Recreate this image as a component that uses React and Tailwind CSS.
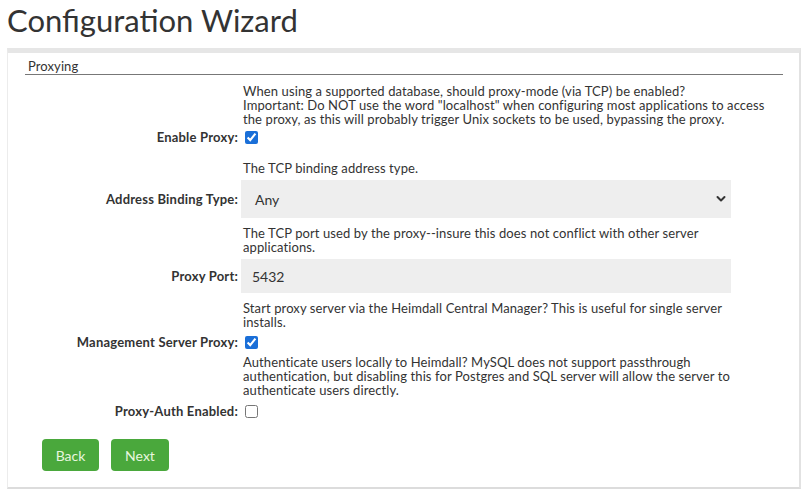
import React from "react";

const font = { fontFamily: "Lato, 'Noto Sans', sans-serif" };

function Desc({ children, mb = "mb-[5px]" }) {
  return (
    <div className={`flex ${mb}`}>
      <div className="w-[235px] shrink-0" />
      <div className="w-[523px] text-[13px] leading-[14px] tracking-[0.1px] text-[#333]">{children}</div>
    </div>
  );
}

function Row({ label, children }) {
  return (
    <div className="flex items-center">
      <div className="w-[230px] shrink-0 text-right text-[13px] font-bold tracking-[0.2px] text-[#333] leading-[14px]">{label}</div>
      <div className="pl-[3px] flex-1 flex items-center">{children}</div>
    </div>
  );
}

function Check({ checked }) {
  return (
    <input
      type="checkbox"
      defaultChecked={checked}
      className="w-[13px] h-[13px] ml-[4px] m-0 accent-[#1a6fd8]"
    />
  );
}

export default function App() {
  return (
    <div className="w-[807px] h-[493px] bg-white overflow-hidden" style={font}>
      <h1 className="text-[31px] leading-[40px] text-[#333] pl-[7px] pt-0 font-normal">Configuration Wizard</h1>
      <div className="mt-[8px] ml-[7px] mr-[6px] h-[441px] border-t-[5px] border-t-[#e6e6e6] border-l border-l-[#ececec] border-r-[2px] border-r-[#e2e2e2] border-b-[2px] border-b-[#dcdcdc] bg-white">
        <div className="mx-[17px] mr-[16px] mt-[6px] border-b border-b-[#777] text-[13px] leading-[15px] tracking-[0.1px] text-[#333] pl-[3px] pb-0">
          Proxying
        </div>
        <div className="mt-[9px]">
          <Desc mb="mb-[4px]">
            When using a supported database, should proxy-mode (via TCP) be enabled?<br />
            Important: Do NOT use the word "localhost" when configuring most applications to access the proxy, as this will probably trigger Unix sockets to be used, bypassing the proxy.
          </Desc>
          <Row label="Enable Proxy:">
            <Check checked />
          </Row>
          <div className="h-[17px]" />
          <Desc>The TCP binding address type.</Desc>
          <Row label="Address Binding Type:">
            <div className="relative w-[490px] h-[38px] bg-[#eeeeee] flex items-center">
              <span className="pl-[14px] text-[14px] text-[#333]">Any</span>
              <svg className="absolute right-[5px] top-[15px]" width="10" height="8" viewBox="0 0 10 8">
                <path d="M1.5 2 L5 5.5 L8.5 2" fill="none" stroke="#333" strokeWidth="2" strokeLinecap="round" strokeLinejoin="round" />
              </svg>
            </div>
          </Row>
          <div className="h-[8px]" />
          <Desc>The TCP port used by the proxy--insure this does not conflict with other server applications.</Desc>
          <Row label="Proxy Port:">
            <div className="w-[490px] h-[34px] bg-[#eeeeee] flex items-center">
              <span className="pl-[11px] text-[14px] text-[#333]">5432</span>
            </div>
          </Row>
          <div className="h-[8px]" />
          <Desc mb="mb-[6px]">Start proxy server via the Heimdall Central Manager? This is useful for single server installs.</Desc>
          <Row label="Management Server Proxy:">
            <Check checked />
          </Row>
          <div className="h-[6px]" />
          <Desc mb="mb-[7px]">Authenticate users locally to Heimdall? MySQL does not support passthrough authentication, but disabling this for Postgres and SQL server will allow the server to authenticate users directly.</Desc>
          <Row label="Proxy-Auth Enabled:">
            <Check />
          </Row>
          <div className="flex gap-[12px] ml-[34px] mt-[21px]">
            <button className="w-[57px] h-[32px] rounded-[4px] bg-[#4aa83c] text-[#e8f6df] text-[14px]">Back</button>
            <button className="w-[58px] h-[32px] rounded-[4px] bg-[#4aa83c] text-[#e8f6df] text-[14px]">Next</button>
          </div>
        </div>
      </div>
    </div>
  );
}
